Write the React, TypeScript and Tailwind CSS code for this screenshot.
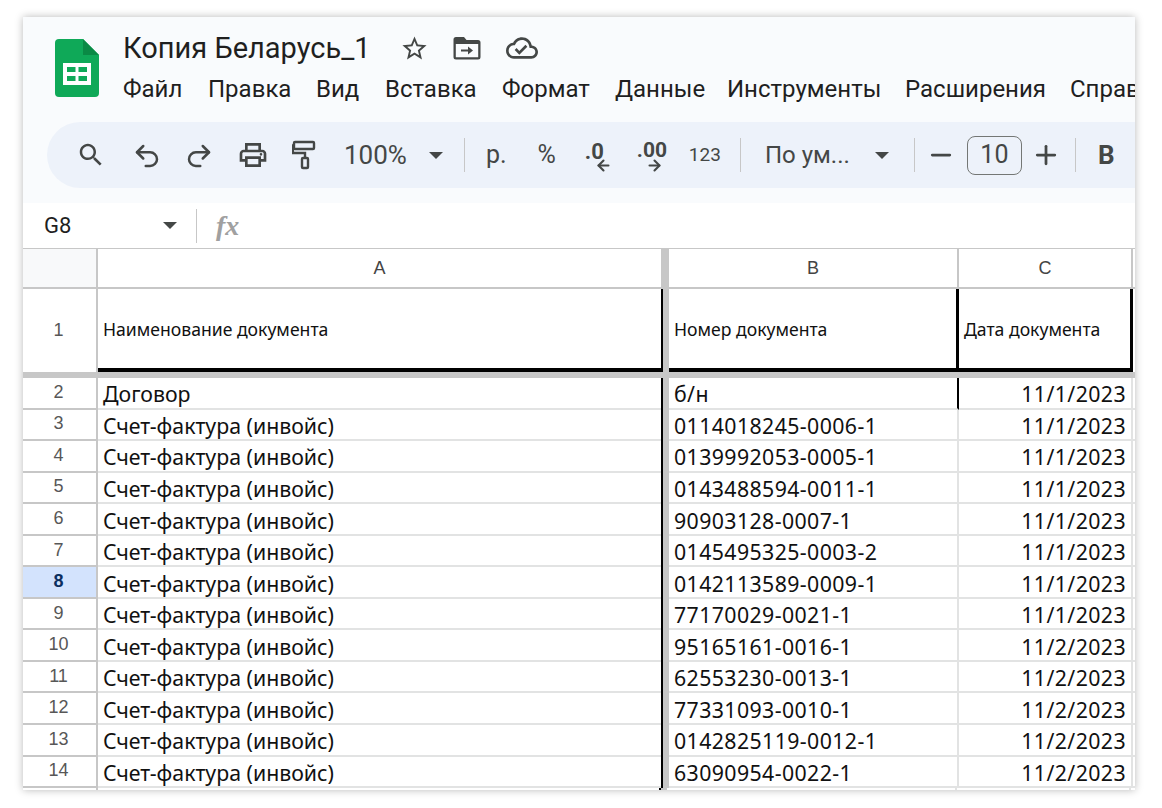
import { ArrowLeft, ArrowRight, Minus, Plus, Redo2, Undo2 } from "lucide-react";

const MENU = [
  ["Файл", "w-[85px]"],
  ["Правка", "w-[108px]"],
  ["Вид", "w-[69px]"],
  ["Вставка", "w-[117px]"],
  ["Формат", "w-[113px]"],
  ["Данные", "w-[112px]"],
  ["Инструменты", "w-[178px]"],
  ["Расширения", "w-[165px]"],
  ["Справка", "w-[90px]"],
];

const ROWS = [
  [3, "0114018245-0006-1", "11/1/2023"],
  [4, "0139992053-0005-1", "11/1/2023"],
  [5, "0143488594-0011-1", "11/1/2023"],
  [6, "90903128-0007-1", "11/1/2023"],
  [7, "0145495325-0003-2", "11/1/2023"],
  [8, "0142113589-0009-1", "11/1/2023"],
  [9, "77170029-0021-1", "11/1/2023"],
  [10, "95165161-0016-1", "11/2/2023"],
  [11, "62553230-0013-1", "11/2/2023"],
  [12, "77331093-0010-1", "11/2/2023"],
  [13, "0142825119-0012-1", "11/2/2023"],
  [14, "63090954-0022-1", "11/2/2023"],
] as const;

function Icon({ d, size = 24, className = "" }: { d: string; size?: number; className?: string }) {
  return (
    <svg width={size} height={size} viewBox="0 0 24 24" fill="#444746" className={`shrink-0 ${className}`}>
      <path d={d} />
    </svg>
  );
}

function Caret({ className = "" }: { className?: string }) {
  return <div className={`w-0 h-0 border-x-[7px] border-x-transparent border-t-[7px] border-t-[#444746] ${className}`} />;
}

function Sep({ className = "" }: { className?: string }) {
  return <div className={`w-px h-[34px] bg-[#c7c7c7] shrink-0 ${className}`} />;
}

function Toolbar() {
  return (
    <div className="h-[66px] ml-6 rounded-l-[33px] bg-[#edf2fa] flex items-center text-[#444746] font-['Roboto',sans-serif] overflow-hidden whitespace-nowrap">
      <Icon className="ml-[29px]" size={30} d="M15.5 14h-.79l-.28-.27C15.41 12.59 16 11.11 16 9.5 16 5.91 13.09 3 9.5 3S3 5.91 3 9.5 5.91 16 9.5 16c1.61 0 3.09-.59 4.23-1.57l.27.28v.79l5 4.99L20.49 19l-4.99-5zm-6 0C7.01 14 5 11.99 5 9.5S7.01 5 9.5 5 14 7.01 14 9.5 11.99 14 9.5 14z" />
      <Undo2 className="ml-[26px] shrink-0 mt-[2px]" size={30} strokeWidth={2} />
      <Redo2 className="ml-[22px] shrink-0 mt-[2px]" size={30} strokeWidth={2} />
      <Icon className="ml-[23px]" size={32} d="M19 8h-1V3H6v5H5c-1.66 0-3 1.34-3 3v6h4v4h12v-4h4v-6c0-1.66-1.34-3-3-3zM8 5h8v3H8V5zm8 14H8v-4h8v4zm4-4h-2v-2H6v2H4v-4c0-.55.45-1 1-1h14c.55 0 1 .45 1 1v4zM18 10.5a1 1 0 1 0 0 2 1 1 0 0 0 0-2z" />
      <svg width="26" height="30" viewBox="0 0 26 30" fill="none" stroke="#444746" strokeWidth="2.4" className="ml-[23px] shrink-0">
        <rect x="2" y="2" width="20" height="7" rx="1" />
        <path d="M2 5.5H0.9v7.5H13v4" />
        <rect x="10" y="18" width="6" height="10" rx="1" />
      </svg>
      <span className="ml-[26px] text-[26px]">100%</span>
      <Caret className="ml-[22px]" />
      <Sep className="ml-[21px]" />
      <span className="ml-[21px] text-[25px]">р.</span>
      <span className="ml-[31px] text-[25px]">%</span>
      <div className="ml-[29px] relative w-[32px] h-[36px] shrink-0">
        <span className="absolute left-0 top-[-2px] text-[22px] font-bold">.0</span>
        <ArrowLeft className="absolute left-[10px] top-[20px]" size={17} strokeWidth={3} />
      </div>
      <div className="ml-[20px] relative w-[32px] h-[36px] shrink-0">
        <span className="absolute left-0 top-[-2px] text-[21px] font-bold">.00</span>
        <ArrowRight className="absolute left-[9px] top-[20px]" size={17} strokeWidth={3} />
      </div>
      <span className="ml-[20px] text-[19px]">123</span>
      <Sep className="ml-[19px]" />
      <span className="ml-[24px] text-[24px] w-[110px]">По ум...</span>
      <Caret />
      <Sep className="ml-[25px]" />
      <Minus className="ml-[11px] shrink-0" size={30} strokeWidth={2.2} />
      <div className="ml-[11px] w-[55px] h-[39px] border border-[#747775] rounded-[8px] flex items-center justify-center text-[25px] shrink-0">10</div>
      <Plus className="ml-[9px] shrink-0" size={30} strokeWidth={2.2} />
      <Sep className="ml-[14px]" />
      <span className="ml-[22px] text-[26px] font-bold">B</span>
    </div>
  );
}

function Header() {
  return (
    <div className="bg-[#f9fbfd] h-[186px] shrink-0 pt-[105px] relative">
      <div className="absolute left-8 top-[22px]">
        <svg width="44" height="58" viewBox="0 0 44 58">
          <path d="M4 0h24l16 16v38a4 4 0 0 1-4 4H4a4 4 0 0 1-4-4V4a4 4 0 0 1 4-4z" fill="#0fa958" />
          <path d="M28 0l16 16H28z" fill="#0a8a45" />
          <path d="M8 24h28v22H8zM12 28v5h8.500v-5zM23.500 28v5H32v-5zM12 37v5h8.500v-5zM23.500 37v5H32v-5z" fill="#fff" fillRule="evenodd" />
        </svg>
      </div>
      <div className="absolute left-[100px] top-[13px] flex items-center font-['Roboto',sans-serif]">
        <span className="text-[29px] leading-9 text-[#1f1f1f] w-[277px] whitespace-nowrap">Копия Беларусь_1</span>
        <Icon size={29} d="M22 9.24l-7.19-.62L12 2 9.19 8.63 2 9.24l5.46 4.73L5.82 21 12 17.27 18.18 21l-1.63-7.03L22 9.24zM12 15.4l-3.76 2.27 1-4.28-3.32-2.88 4.38-.38L12 6.1l1.71 4.04 4.38.38-3.32 2.88 1 4.28L12 15.4z" />
        <svg width="28" height="24" viewBox="0 0 28 24" fill="#444746" className="ml-[24px] shrink-0">
          <path d="M3 1h8l2.500 3H25a2.500 2.500 0 0 1 2.500 2.500V21a2.500 2.500 0 0 1-2.500 2.500H3A2.500 2.500 0 0 1 .5 21V3.500A2.500 2.500 0 0 1 3 1zm-.2 7v13.200h22.400V8z" fillRule="evenodd" />
          <path d="M8 13.500h7V10.500l5 4-5 4v-3H8z" />
        </svg>
        <Icon className="ml-[25px]" size={32} d="M19.350 10.040C18.670 6.590 15.640 4 12 4 9.110 4 6.600 5.640 5.350 8.040 2.340 8.360 0 10.910 0 14c0 3.310 2.690 6 6 6h13c2.760 0 5-2.240 5-5 0-2.640-2.050-4.780-4.650-4.960zM19 18H6c-2.210 0-4-1.790-4-4 0-2.050 1.530-3.760 3.560-3.970l1.070-.11.500-.95C8.080 7.140 9.940 6 12 6c2.620 0 4.880 1.860 5.390 4.430l.3 1.500 1.530.11c1.560.1 2.780 1.410 2.780 2.960 0 1.650-1.350 3-3 3zm-9-3.820l-2.090-2.090L6.500 13.500 10 17l6.010-6.010-1.410-1.410z" />
      </div>
      <div className="absolute left-[100px] top-[56px] flex font-['Roboto',sans-serif] text-[24px] leading-8 text-[#1f1f1f] whitespace-nowrap">
        {MENU.map(([label, w]) => (
          <span key={label} className={`${w} shrink-0`}>
            {label}
          </span>
        ))}
      </div>
      <Toolbar />
    </div>
  );
}

function FormulaBar() {
  return (
    <div className="h-[46px] bg-white flex items-center shrink-0 font-['Roboto',sans-serif] border-b border-[#c7c7c7]">
      <span className="ml-[21px] w-[119px] text-[22px] text-[#1f1f1f]">G8</span>
      <Caret />
      <Sep className="ml-[19px] h-[28px]" />
      <span className="ml-[19px] text-[28px] font-bold italic text-[#a0a0a0] font-['Liberation_Serif',serif]">fx</span>
    </div>
  );
}

function RowHead({ n, active }: { n: number; active?: boolean }) {
  return (
    <div
      className={`w-[75px] shrink-0 flex items-center justify-center pb-[1px] pr-[2px] text-[18px] font-['Liberation_Sans',sans-serif] border-r-2 border-r-[#c7c7c7] border-b-2 border-b-[#c7c7c7] ${
        active ? "bg-[#d3e3fd] font-bold text-[#0b2f5f]" : "bg-white text-[#575757]"
      }`}
    >
      {n}
    </div>
  );
}

function ColHeads() {
  const cell = "flex items-center justify-center text-[18px] text-[#444] font-['Liberation_Sans',sans-serif] shrink-0 border-b-2 border-[#c7c7c7]";
  return (
    <div className="flex h-[40px] shrink-0">
      <div className={`w-[75px] bg-[#f8f9fa] border-r-2 ${cell}`} />
      <div className={`w-[563px] ${cell}`}>A</div>
      <div className="w-[8px] bg-[#c7c7c7] shrink-0" />
      <div className={`w-[290px] border-r-2 ${cell}`}>B</div>
      <div className={`w-[174px] border-r-2 ${cell}`}>C</div>
      <div className={`flex-1 ${cell}`} />
    </div>
  );
}

function TitleRow() {
  const cell = "flex items-center pt-[2px] text-[17.6px] text-[#111] shrink-0 border-b-4 border-black";
  return (
    <div className="flex h-[83px] shrink-0 font-['Noto_Sans',sans-serif] whitespace-nowrap">
      <div className="w-[75px] shrink-0 flex items-center justify-center pr-[2px] text-[18px] text-[#575757] font-['Liberation_Sans',sans-serif] border-r-2 border-r-[#c7c7c7]">1</div>
      <div className={`w-[563px] pl-[5px] ${cell}`}>Наименование документа</div>
      <div className="w-[2px] bg-black shrink-0" />
      <div className="w-[6px] bg-[#c7c7c7] shrink-0" />
      <div className={`w-[290px] pl-[5px] border-r-[3px] ${cell}`}>Номер документа</div>
      <div className={`w-[174px] pl-[5px] border-r-[3px] ${cell}`}>Дата документа</div>
      <div className="flex-1" />
    </div>
  );
}

function DataRow({ n, name, num, date, dark }: { n: number; name: string; num: string; date: string; dark?: boolean }) {
  const cell = "flex items-center h-full shrink-0 pt-[3px] border-b-2 border-[#e2e3e3]";
  return (
    <div className="flex h-[31.55px] shrink-0 text-[21.3px] text-[#111] font-['Noto_Sans',sans-serif] whitespace-nowrap">
      <RowHead n={n} active={n === 8} />
      <div className={`w-[563px] pl-[5px] ${cell}`}>{name}</div>
      <div className="w-[2px] bg-black shrink-0" />
      <div className="w-[6px] bg-[#c7c7c7] shrink-0" />
      <div className={`w-[290px] pl-[5px] tracking-[0.4px] border-r-2 ${dark ? "border-r-black" : "border-r-[#e2e3e3]"} ${cell}`}>{num}</div>
      <div className={`w-[174px] pr-[5px] tracking-[0.4px] justify-end border-r-2 border-r-[#e2e3e3] ${cell}`}>{date}</div>
      <div className={`flex-1 !shrink ${cell}`} />
    </div>
  );
}

export default function App() {
  return (
    <div className="w-[1162px] h-[808px] bg-white pt-[17px] pl-[23px] overflow-hidden">
      <div className="w-[1112px] h-[773px] bg-white shadow-[0_0_8px_rgba(0,0,0,0.28)] flex flex-col overflow-hidden">
        <Header />
        <FormulaBar />
        <ColHeads />
        <TitleRow />
        <div className="h-[6px] bg-[#c7c7c7] shrink-0" />
        <DataRow n={2} name="Договор" num="б/н" date="11/1/2023" dark />
        {ROWS.map(([n, num, date]) => (
          <DataRow key={n} n={n} name="Счет-фактура (инвойс)" num={num} date={date} />
        ))}
        <div className="flex flex-1 min-h-0">
          <div className="w-[75px] border-r-2 border-[#c7c7c7] shrink-0" />
          <div className="w-[563px] border-r-2 border-black shrink-0" />
          <div className="w-[6px] bg-[#c7c7c7] shrink-0" />
          <div className="w-[290px] border-r-2 border-[#e2e3e3] shrink-0" />
          <div className="w-[174px] border-r-2 border-[#e2e3e3] shrink-0" />
        </div>
      </div>
    </div>
  );
}
